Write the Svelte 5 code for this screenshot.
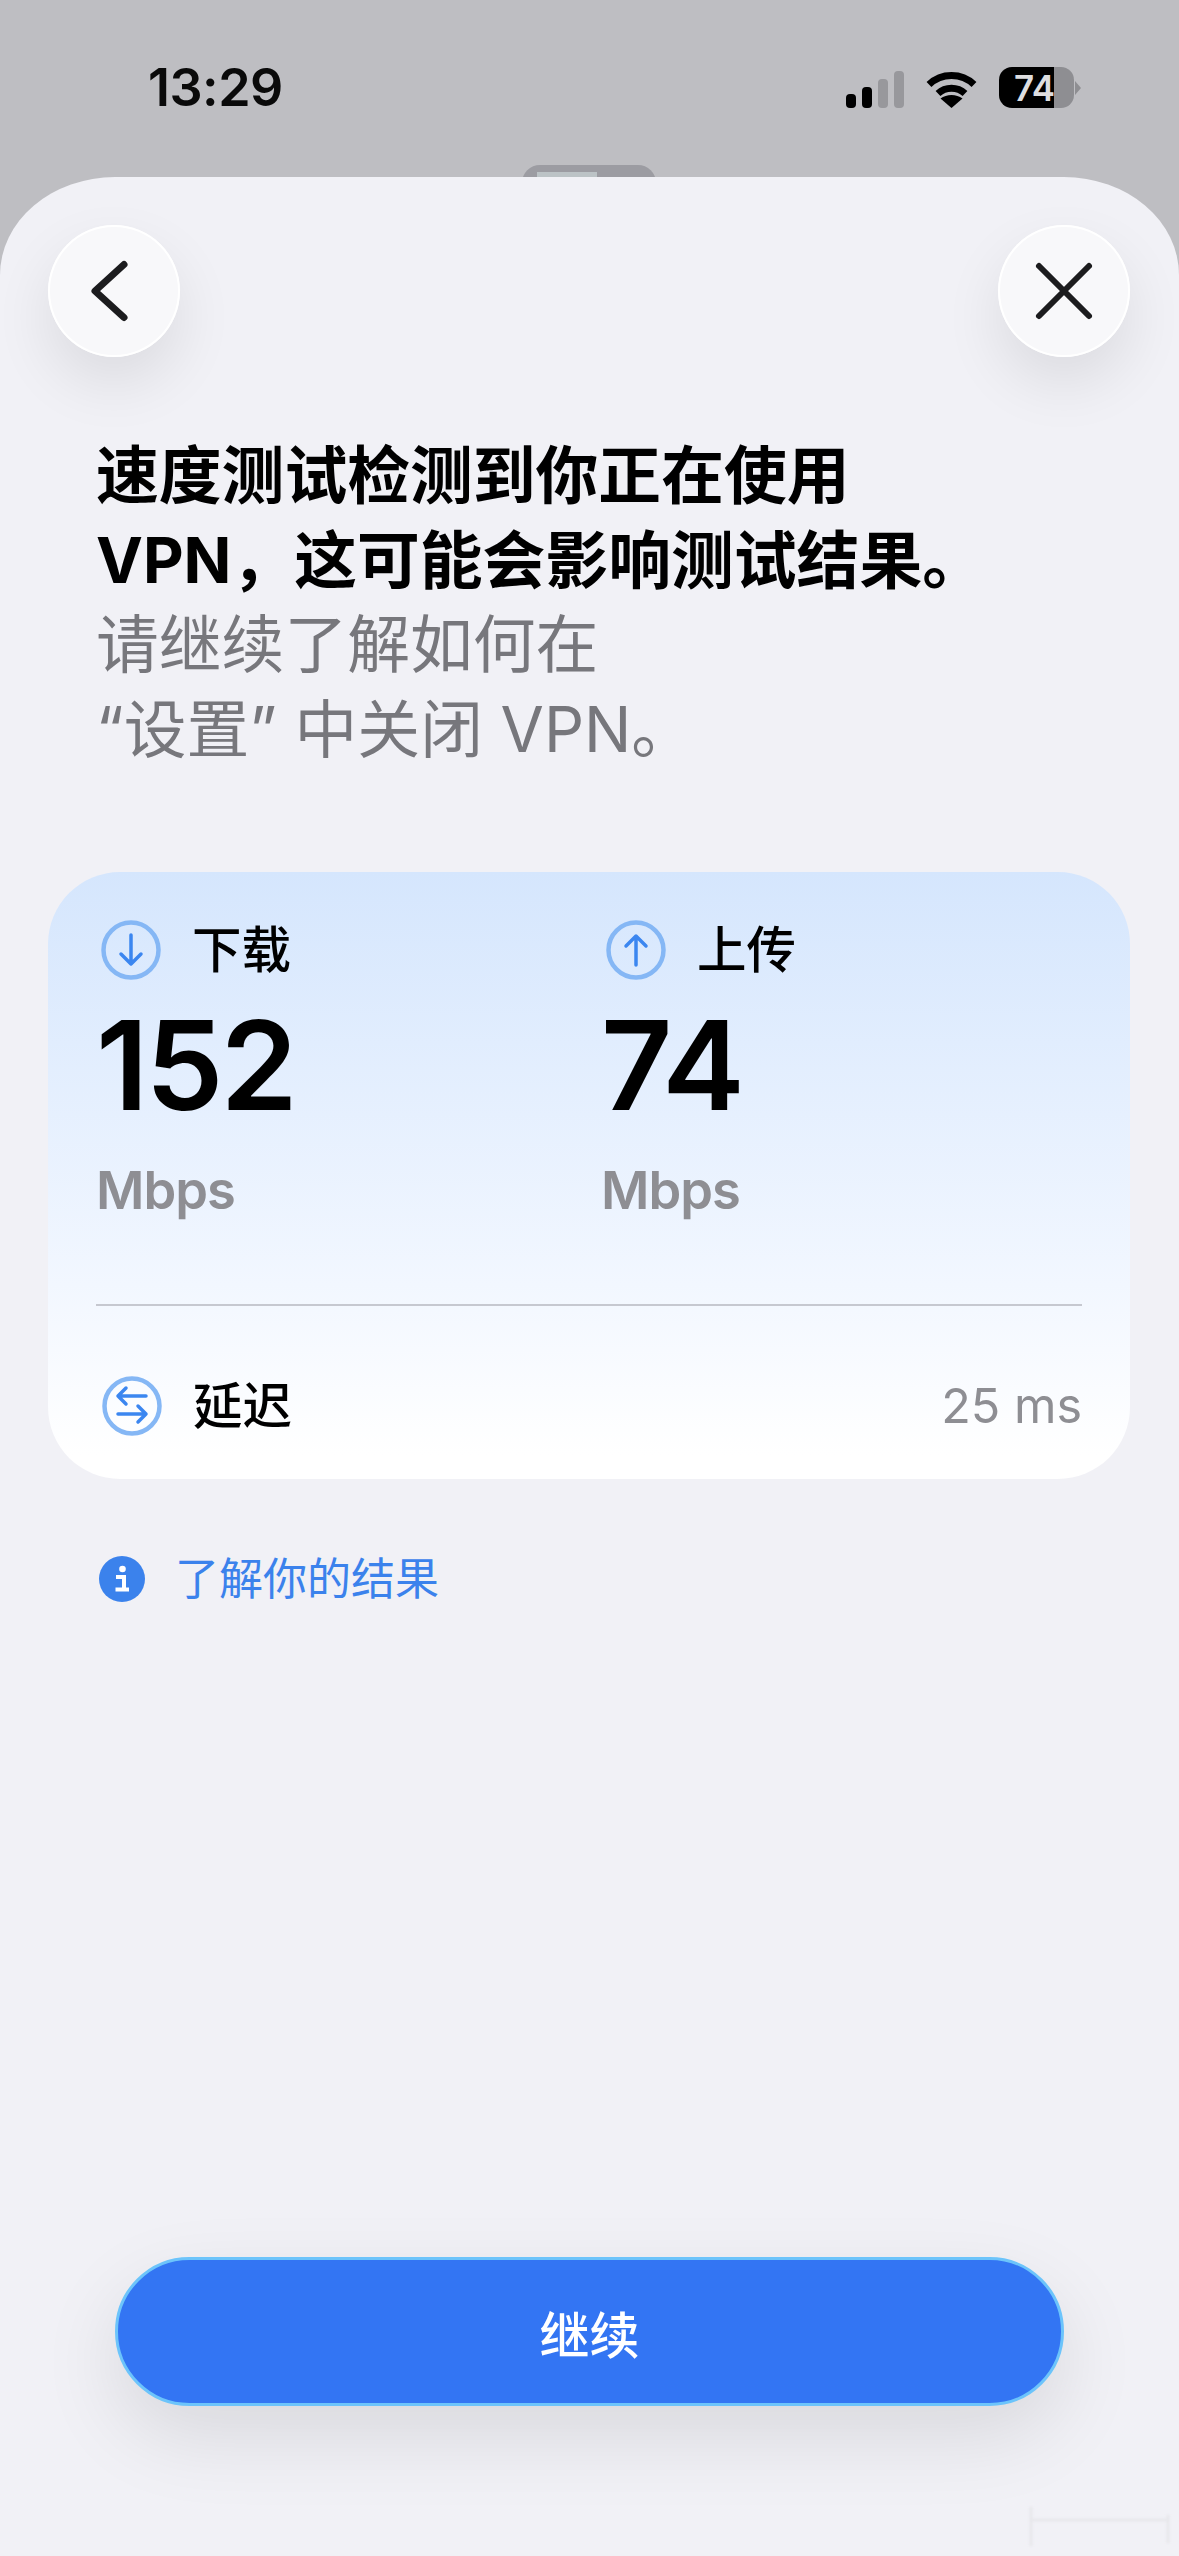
<script>
	const speeds = [
		{ label: '下载', value: '152', unit: 'Mbps', arrow: 'M30 15V44M20 34L30 44L40 34' },
		{ label: '上传', value: '74', unit: 'Mbps', arrow: 'M30 45V16M20 26L30 16L40 26' }
	]
</script>

<div class="screen">
	<header class="status">
		<span class="time">13:29</span>
		<div class="status-icons">
			<svg class="signal" viewBox="0 0 58 37" width="58" height="37">
				<rect x="0" y="23" width="10" height="14" rx="4" fill="#000" />
				<rect x="16" y="16" width="10" height="21" rx="4" fill="#000" />
				<rect x="32" y="8" width="10" height="29" rx="4" fill="#98989c" />
				<rect x="48" y="0" width="10" height="37" rx="4" fill="#98989c" />
			</svg>
			<svg class="wifi" viewBox="0 0 51 37" width="51" height="37">
				<path d="M3 13.5C15.500 1.500 35.500 1.500 48 13.500" fill="none" stroke="#000" stroke-width="7" />
				<path d="M12 22.500C19.500 15.500 31.500 15.500 39 22.500" fill="none" stroke="#000" stroke-width="7" />
				<path d="M25.500 37L14.500 27.500C20.500 22.800 30.500 22.800 36.500 27.500Z" fill="#000" />
			</svg>
			<div class="battery"><span>74</span></div>
			<i class="nub"></i>
		</div>
	</header>
	<div class="peek-row"><div class="peek"></div></div>

	<main class="sheet">
		<div class="nav">
			<button class="round" aria-label="返回">
				<svg viewBox="0 0 132 132" width="132" height="132">
					<path d="M76 39.500L47 66L76 92.500" fill="none" stroke="#1c1c1e" stroke-width="7" stroke-linecap="round" stroke-linejoin="round" />
				</svg>
			</button>
			<button class="round" aria-label="关闭">
				<svg viewBox="0 0 132 132" width="132" height="132">
					<path d="M41 41L91 91M91 41L41 91" fill="none" stroke="#1c1c1e" stroke-width="6" stroke-linecap="round" />
				</svg>
			</button>
		</div>

		<div class="message">
			<p class="strong">速度测试检测到你正在使用<br />VPN，这可能会影响测试结果。</p>
			<p class="muted">请继续了解如何在<br />“设置” 中关闭 VPN。</p>
		</div>

		<section class="card">
			<div class="speeds">
				{#each speeds as speed}
					<div class="speed">
						<div class="speed-head">
							<svg class="ring" viewBox="0 0 60 60" width="60" height="60">
								<circle cx="30" cy="30" r="27.500" fill="none" stroke="#85b7f5" stroke-width="4.500" />
								<path d={speed.arrow} fill="none" stroke="#3b86f0" stroke-width="3.500" stroke-linecap="round" stroke-linejoin="round" />
							</svg>
							<span class="label">{speed.label}</span>
						</div>
						<div class="value">{speed.value}</div>
						<div class="unit">{speed.unit}</div>
					</div>
				{/each}
			</div>
			<div class="divider"></div>
			<div class="latency">
				<svg class="ring" viewBox="0 0 60 60" width="60" height="60">
					<circle cx="30" cy="30" r="27.500" fill="none" stroke="#85b7f5" stroke-width="4.500" />
					<path d="M44 20H16M24 12L16 20L24 28M16 38H44M36 30L44 38L36 46" fill="none" stroke="#3b86f0" stroke-width="3.500" stroke-linecap="round" stroke-linejoin="round" />
				</svg>
				<span class="label">延迟</span>
				<span class="latency-value">25 ms</span>
			</div>
		</section>

		<a class="learn" href="#results">
			<svg viewBox="0 0 46 46" width="46" height="46">
				<circle cx="23" cy="23" r="23" fill="#3b82ec" />
				<circle cx="23.500" cy="13" r="3.300" fill="#fff" />
				<path d="M17 21H25V33M16.500 33.500H30" fill="none" stroke="#fff" stroke-width="4" />
			</svg>
			<span>了解你的结果</span>
		</a>

		<button class="continue">继续</button>
	</main>

	<svg class="watermark" viewBox="0 0 160 44" width="160" height="44">
		<path d="M20 3V42M20 16H157M157 11V39" fill="none" stroke="#e7e7eb" stroke-width="3" />
	</svg>
</div>

<style>
	:global(body) {
		margin: 0;
	}

	.screen {
		position: relative;
		width: 1179px;
		height: 2556px;
		overflow: hidden;
		background: #bebec2;
		font-family: Inter, "Noto Sans CJK SC", sans-serif;
		display: flex;
		flex-direction: column;
	}

	.status {
		height: 165px;
		padding: 0 98px 0 148px;
		box-sizing: border-box;
		display: flex;
		justify-content: space-between;
		align-items: flex-start;
	}

	.time {
		margin-top: 58px;
		font-size: 52px;
		line-height: 60px;
		font-weight: 600;
		color: #0a0a0a;
		letter-spacing: -0.5px;
	}

	.status-icons {
		margin-top: 67px;
		display: flex;
		align-items: center;
		height: 41px;
	}

	.signal {
		margin-right: 22px;
		margin-top: 4px;
	}

	.wifi {
		margin-right: 22px;
		margin-top: 4px;
	}

	.battery {
		width: 75px;
		height: 41px;
		border-radius: 13px;
		background: linear-gradient(to right, #000 74%, #8e8e92 74%);
		display: flex;
		align-items: center;
		padding-left: 15px;
		box-sizing: border-box;
	}

	.battery span {
		font-size: 35px;
		font-weight: 600;
		color: #dedee0;
		letter-spacing: -0.5px;
	}

	.nub {
		width: 0;
		height: 0;
		margin-left: 1px;
		border-left: 6px solid #8e8e92;
		border-top: 7px solid transparent;
		border-bottom: 7px solid transparent;
	}

	.peek-row {
		height: 12px;
		display: flex;
		justify-content: center;
	}

	.peek {
		width: 134px;
		height: 30px;
		margin-right: 1px;
		border-radius: 18px 18px 0 0;
		background: linear-gradient(#bcc3c6, #bcc3c6) 15px 7px / 60px 100% no-repeat, #9c9ca2;
	}

	.sheet {
		position: relative;
		flex: 1;
		background: #f1f1f6;
		border-radius: 115px 115px 0 0 / 98px 98px 0 0;
		padding: 48px 49px 150px 48px;
		display: flex;
		flex-direction: column;
	}

	.nav {
		display: flex;
		justify-content: space-between;
	}

	.round {
		width: 132px;
		height: 132px;
		padding: 0;
		border: 0;
		border-radius: 50%;
		background: #f8f8fa;
		box-shadow: inset 0 0 0 2px #fff, 0 26px 60px rgba(0, 0, 0, 0.09);
	}

	.round svg {
		display: block;
	}

	.message {
		margin: 76px 0 0 48px;
		font-size: 62.800px;
		line-height: 84.500px;
	}

	.message p {
		margin: 0;
	}

	.strong {
		font-weight: 700;
		color: #000;
	}

	.muted {
		font-weight: 400;
		color: #77777c;
	}

	.card {
		margin-top: 101px;
		height: 607px;
		box-sizing: border-box;
		border-radius: 72px;
		padding: 48px 48px 0 48px;
		background: linear-gradient(to bottom, #d5e6fd 0%, #f2f7ff 68%, #ffffff 96%);
	}

	.speeds {
		display: grid;
		grid-template-columns: 505px 1fr;
		height: 384px;
	}

	.speed-head {
		display: flex;
		align-items: center;
		gap: 31px;
		padding-left: 5px;
	}

	.ring {
		display: block;
		flex: none;
	}

	.label {
		font-size: 49.500px;
		line-height: 60px;
		font-weight: 500;
		color: #000;
	}

	.value {
		margin-top: 20px;
		font-size: 124px;
		line-height: 130px;
		font-weight: 600;
		color: #000;
		letter-spacing: -3px;
	}

	.unit {
		margin-top: 30px;
		font-size: 52.500px;
		line-height: 60px;
		font-weight: 600;
		color: #8e8e93;
		letter-spacing: -1px;
	}

	.divider {
		height: 2px;
		background: #c6c8d0;
	}

	.latency {
		height: 173px;
		box-sizing: border-box;
		display: flex;
		align-items: center;
		gap: 31px;
		padding: 26px 0 0 6px;
	}

	.latency-value {
		margin-left: auto;
		font-size: 48.500px;
		color: #8e8e93;
	}

	.learn {
		margin: 77px 0 0 51px;
		display: flex;
		align-items: center;
		gap: 30px;
		text-decoration: none;
		font-size: 44px;
		line-height: 46px;
		color: #3b82ec;
	}

	.learn svg {
		display: block;
	}

	.continue {
		margin: auto 66px 0 67px;
		height: 149px;
		border: 3px solid #6cc4fb;
		border-radius: 75px;
		background: #3375f3;
		font-family: inherit;
		font-size: 50px;
		font-weight: 500;
		color: #fff;
		box-shadow: 0 30px 80px rgba(0, 0, 0, 0.1);
	}

	.watermark {
		position: absolute;
		right: 8px;
		bottom: 8px;
		filter: blur(1px);
	}
</style>
